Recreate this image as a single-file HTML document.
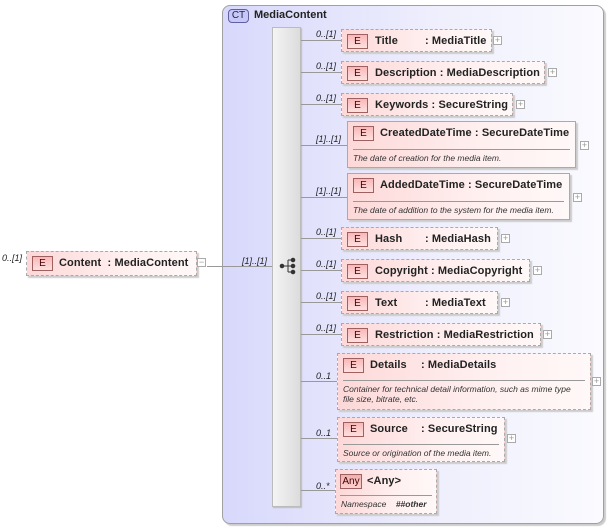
<!DOCTYPE html>
<html><head><meta charset="utf-8"><style>
*{margin:0;padding:0;box-sizing:border-box}
body{width:609px;height:529px;background:#fff;position:relative;overflow:hidden;font-family:"Liberation Sans",Arial,sans-serif;color:#222}
.a{position:absolute}
.ct{left:222px;top:5px;width:382px;height:519px;border:1px solid #a0a0a0;border-radius:8px;background:linear-gradient(to right,#d8d8fc,#f0f0fd 60%,#fafaff);box-shadow:2px 2px 1px #ccc}
.ctb{left:228px;top:9px;width:21px;height:14px;border:1px solid #6060a0;border-radius:4px;background:#c8c8f8;font-size:10px;text-align:center;line-height:12px;color:#224}
.seq{left:272px;top:27px;width:29px;height:480px;background:linear-gradient(to right,#f4f4f4,#dcdcdc);border:1px solid #bbb;box-shadow:1px 1px 1px #bbb}
.bx{position:absolute;background:linear-gradient(to right,#fdd8d8,#fff0f0 60%,#fff8f8);border:1px dashed #aaa;box-shadow:2px 2px 1px #ccc}
.bx.s{border:1px solid #aaa}
.e{position:absolute;left:5px;top:4px;width:21px;height:15px;border:1px solid #a06060;background:linear-gradient(#f9b8b8,#fde0e0);font-size:10px;text-align:center;line-height:14px;color:#400}
.n{position:absolute;top:4px;font-size:11px;font-weight:bold;white-space:nowrap;line-height:14px;letter-spacing:0.1px}
.d{position:absolute;left:5px;font-size:8.5px;font-style:italic;color:#333;line-height:10px}
.hr{position:absolute;left:5px;right:5px;height:1px;background:#999}
.p{position:absolute;width:9px;height:9px;border:1px solid #aaa;background:#fff;font-size:9px;line-height:7px;text-align:center;color:#999}
.l{position:absolute;height:1px;background:#999}
.c{position:absolute;font-size:9px;font-style:italic;color:#222}
</style></head><body>
<div class="a ct"></div>
<div class="a ctb">CT</div>
<div class="a" style="left:254px;top:9px;font-size:11px;font-weight:bold">MediaContent</div>
<div class="a seq"></div>
<svg class="a" style="left:279px;top:257px" width="18" height="18" viewBox="0 0 18 18"><g fill="#333" stroke="#333"><circle cx="3" cy="9" r="1.8"/><line x1="3" y1="9" x2="9" y2="9"/><line x1="9" y1="3" x2="9" y2="15"/><line x1="9" y1="3" x2="14" y2="3"/><line x1="9" y1="9" x2="14" y2="9"/><line x1="9" y1="15" x2="14" y2="15"/><circle cx="14" cy="3" r="1.8"/><circle cx="14" cy="9" r="1.8"/><circle cx="14" cy="15" r="1.8"/></g></svg>

<div class="c" style="left:2px;top:253px">0..[1]</div>
<div class="bx" style="left:26px;top:251px;width:171px;height:25px"><div class="e">E</div><div class="n" style="left:32px">Content&nbsp;&nbsp;: MediaContent</div></div>
<div class="p" style="left:197px;top:258px">−</div>
<div class="l" style="left:207px;top:266px;width:65px"></div>
<div class="c" style="left:242px;top:256px">[1]..[1]</div>

<div class="l" style="left:301px;top:40px;width:40px"></div>
<div class="l" style="left:301px;top:72px;width:40px"></div>
<div class="l" style="left:301px;top:104px;width:40px"></div>
<div class="l" style="left:301px;top:145px;width:46px"></div>
<div class="l" style="left:301px;top:197px;width:46px"></div>
<div class="l" style="left:301px;top:238px;width:40px"></div>
<div class="l" style="left:301px;top:270px;width:40px"></div>
<div class="l" style="left:301px;top:302px;width:40px"></div>
<div class="l" style="left:301px;top:334px;width:40px"></div>
<div class="l" style="left:301px;top:381px;width:36px"></div>
<div class="l" style="left:301px;top:438px;width:36px"></div>
<div class="l" style="left:301px;top:490px;width:34px"></div>

<div class="c" style="left:316px;top:29px">0..[1]</div>
<div class="bx" style="left:341px;top:29px;width:151px;height:23px"><div class="e">E</div><div class="n" style="left:33px">Title</div><div class="n" style="left:83px">: MediaTitle</div></div>
<div class="p" style="left:493px;top:36px">+</div>

<div class="c" style="left:316px;top:61px">0..[1]</div>
<div class="bx" style="left:341px;top:61px;width:204px;height:23px"><div class="e">E</div><div class="n" style="left:33px">Description : MediaDescription</div></div>
<div class="p" style="left:548px;top:68px">+</div>

<div class="c" style="left:316px;top:93px">0..[1]</div>
<div class="bx" style="left:341px;top:93px;width:172px;height:23px"><div class="e">E</div><div class="n" style="left:33px">Keywords : SecureString</div></div>
<div class="p" style="left:516px;top:100px">+</div>

<div class="c" style="left:316px;top:134px">[1]..[1]</div>
<div class="bx s" style="left:347px;top:121px;width:229px;height:47px"><div class="e">E</div><div class="n" style="left:32px">CreatedDateTime : SecureDateTime</div><div class="hr" style="top:27px"></div><div class="d" style="top:31px">The date of creation for the media item.</div></div>
<div class="p" style="left:580px;top:141px">+</div>

<div class="c" style="left:316px;top:186px">[1]..[1]</div>
<div class="bx s" style="left:347px;top:173px;width:223px;height:47px"><div class="e">E</div><div class="n" style="left:32px">AddedDateTime : SecureDateTime</div><div class="hr" style="top:27px"></div><div class="d" style="top:31px">The date of addition to the system for the media item.</div></div>
<div class="p" style="left:573px;top:193px">+</div>

<div class="c" style="left:316px;top:227px">0..[1]</div>
<div class="bx" style="left:341px;top:227px;width:157px;height:23px"><div class="e">E</div><div class="n" style="left:33px">Hash</div><div class="n" style="left:83px">: MediaHash</div></div>
<div class="p" style="left:501px;top:234px">+</div>

<div class="c" style="left:316px;top:259px">0..[1]</div>
<div class="bx" style="left:341px;top:259px;width:189px;height:23px"><div class="e">E</div><div class="n" style="left:33px">Copyright : MediaCopyright</div></div>
<div class="p" style="left:533px;top:266px">+</div>

<div class="c" style="left:316px;top:291px">0..[1]</div>
<div class="bx" style="left:341px;top:291px;width:157px;height:23px"><div class="e">E</div><div class="n" style="left:33px">Text</div><div class="n" style="left:83px">: MediaText</div></div>
<div class="p" style="left:501px;top:298px">+</div>

<div class="c" style="left:316px;top:323px">0..[1]</div>
<div class="bx" style="left:341px;top:323px;width:200px;height:23px"><div class="e">E</div><div class="n" style="left:33px">Restriction : MediaRestriction</div></div>
<div class="p" style="left:543px;top:330px">+</div>

<div class="c" style="left:316px;top:371px">0..1</div>
<div class="bx" style="left:337px;top:353px;width:254px;height:57px"><div class="e">E</div><div class="n" style="left:32px">Details</div><div class="n" style="left:83px">: MediaDetails</div><div class="hr" style="top:26px"></div><div class="d" style="top:30px">Container for technical detail information, such as mime type<br>file size, bitrate, etc.</div></div>
<div class="p" style="left:592px;top:377px">+</div>

<div class="c" style="left:316px;top:428px">0..1</div>
<div class="bx" style="left:337px;top:417px;width:168px;height:45px"><div class="e">E</div><div class="n" style="left:32px">Source</div><div class="n" style="left:83px">: SecureString</div><div class="hr" style="top:26px"></div><div class="d" style="top:30px">Source or origination of the media item.</div></div>
<div class="p" style="left:507px;top:434px">+</div>

<div class="c" style="left:316px;top:481px">0..*</div>
<div class="bx" style="left:335px;top:469px;width:102px;height:45px"><div class="e" style="left:4px;width:22px;background:linear-gradient(#f0b0b0,#fbd0d0)">Any</div><div class="n" style="left:31px;font-weight:bold">&lt;Any&gt;</div><div class="hr" style="top:25px;left:4px;right:4px"></div><div class="d" style="top:29px;left:5px">Namespace &nbsp;&nbsp;&nbsp;<b>##other</b></div></div>
</body></html>
